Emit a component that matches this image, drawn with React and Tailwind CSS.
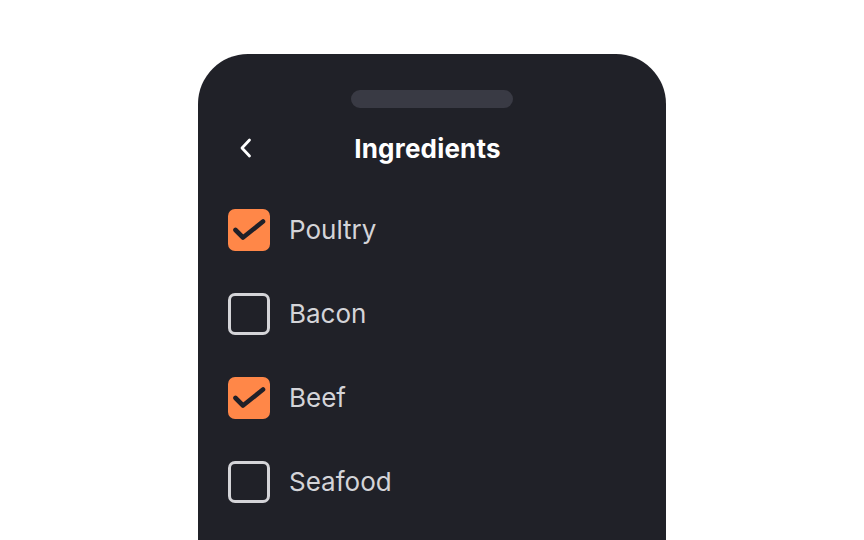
import React from "react";

const items = [
  { label: "Poultry", checked: true },
  { label: "Bacon", checked: false },
  { label: "Beef", checked: true },
  { label: "Seafood", checked: false },
];

function Box({ checked }) {
  if (checked) {
    return (
      <div className="w-[42px] h-[42px] rounded-[7px] bg-[#ff8748] shrink-0">
        <svg width="42" height="42" viewBox="0 0 42 42" fill="none">
          <path d="M7.5 21 L15 28.5 L35 12.5" stroke="#202028" strokeWidth="4.6" strokeLinecap="round" strokeLinejoin="round" />
        </svg>
      </div>
    );
  }
  return <div className="w-[42px] h-[42px] rounded-[7px] border-[3px] border-[#d4d4d8] shrink-0" />;
}

export default function App() {
  return (
    <div className="w-[864px] h-[540px] bg-white overflow-hidden" style={{ fontFamily: "Inter, 'Noto Sans', sans-serif" }}>
      <div className="mx-auto mt-[54px] w-[468px] h-[600px] bg-[#202128] rounded-t-[50px] px-[30px] pt-[36px] flex flex-col">
        <div className="mx-auto w-[162px] h-[18px] rounded-full bg-[#393a44]" />
        <div className="mt-[17px] h-[48px] grid grid-cols-[36px_1fr_45px] items-center">
          <div className="pl-[12px] flex items-center -mt-[2px]">
            <svg width="12" height="20" viewBox="0 0 12 20" fill="none">
              <path d="M9.5 2 L2 10 L9.5 18" stroke="#ffffff" strokeWidth="2.8" strokeLinecap="round" strokeLinejoin="round" />
            </svg>
          </div>
          <div className="text-center text-white text-[26px] font-bold leading-none tracking-[0.2px]">Ingredients</div>
          <div />
        </div>
        <div className="mt-[15px] flex flex-col">
          {items.map((it) => (
            <div key={it.label} className="h-[84px] flex items-center gap-[19px]">
              <Box checked={it.checked} />
              <span className="text-[26px] text-[#d4d4d8] leading-none">{it.label}</span>
            </div>
          ))}
        </div>
      </div>
    </div>
  );
}
